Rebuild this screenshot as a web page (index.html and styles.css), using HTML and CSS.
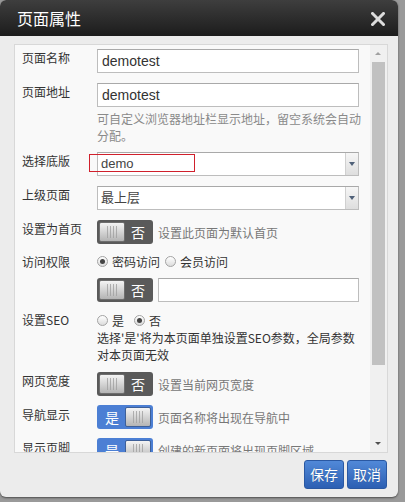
FILE: index.html
```html
<!DOCTYPE html>
<html>
<head>
<meta charset="utf-8">
<link rel="stylesheet" href="styles.css">
</head>
<body>
<div class="dialog">
  <div class="header">
    <span class="title">页面属性</span>
    <svg class="close" width="14" height="14" viewBox="0 0 14 14"><path d="M1.5 1.5 L12.5 12.5 M12.5 1.5 L1.5 12.5" stroke="#dcdcdc" stroke-width="3" stroke-linecap="square"/></svg>
  </div>
  <div class="body">
    <div class="panel">
      <div class="content">
        <div class="row r1">
          <div class="label">页面名称</div>
          <div class="field"><div class="input">demotest</div></div>
        </div>
        <div class="row r2">
          <div class="label">页面地址</div>
          <div class="field">
            <div class="input">demotest</div>
            <div class="hint">可自定义浏览器地址栏显示地址，留空系统会自动分配。</div>
          </div>
        </div>
        <div class="row r3">
          <div class="label">选择底版</div>
          <div class="field">
            <div class="select"><span class="sel-text">demo</span><span class="sel-arrow"></span><span class="redbox"></span></div>
          </div>
        </div>
        <div class="row r4">
          <div class="label">上级页面</div>
          <div class="field">
            <div class="select"><span class="sel-text">最上层</span><span class="sel-arrow"></span></div>
          </div>
        </div>
        <div class="row r5">
          <div class="label">设置为首页</div>
          <div class="field inline">
            <div class="toggle off"><span class="knob"><i class="grip"></i></span><span class="tg-text">否</span></div>
            <span class="desc">设置此页面为默认首页</span>
          </div>
        </div>
        <div class="row r6">
          <div class="label">访问权限</div>
          <div class="field inline">
            <span class="radio checked"></span><span class="rlabel">密码访问</span>
            <span class="radio"></span><span class="rlabel">会员访问</span>
          </div>
        </div>
        <div class="row r7">
          <div class="label"></div>
          <div class="field inline">
            <div class="toggle off"><span class="knob"><i class="grip"></i></span><span class="tg-text">否</span></div>
            <div class="input grow"></div>
          </div>
        </div>
        <div class="row r8">
          <div class="label">设置SEO</div>
          <div class="field">
            <div class="radios">
              <span class="radio"></span><span class="rlabel">是</span>
              <span class="radio checked"></span><span class="rlabel">否</span>
            </div>
            <div class="seo-desc">选择'是'将为本页面单独设置SEO参数，全局参数对本页面无效</div>
          </div>
        </div>
        <div class="row r9">
          <div class="label">网页宽度</div>
          <div class="field inline">
            <div class="toggle off"><span class="knob"><i class="grip"></i></span><span class="tg-text">否</span></div>
            <span class="desc">设置当前网页宽度</span>
          </div>
        </div>
        <div class="row r10">
          <div class="label">导航显示</div>
          <div class="field inline">
            <div class="toggle on"><span class="tg-text">是</span><span class="knob"><i class="grip"></i></span></div>
            <span class="desc">页面名称将出现在导航中</span>
          </div>
        </div>
        <div class="row r11">
          <div class="label">显示页脚</div>
          <div class="field inline">
            <div class="toggle on"><span class="tg-text">是</span><span class="knob"><i class="grip"></i></span></div>
            <span class="desc">创建的新页面将出现页脚区域</span>
          </div>
        </div>
      </div>
      <div class="scrollbar">
        <div class="sb-btn"><span class="sb-up"></span></div>
        <div class="sb-thumb"></div>
        <div class="sb-track"></div>
        <div class="sb-btn"><span class="sb-down"></span></div>
      </div>
    </div>
    <div class="footer">
      <button class="btn">保存</button>
      <button class="btn">取消</button>
    </div>
  </div>
</div>
</body>
</html>
```
FILE: styles.css
```css
html, body {
  margin: 0;
  padding: 0;
}
body {
  width: 405px;
  height: 502px;
  background: #9a9a9a;
  font-family: "Liberation Sans", "Noto Sans CJK SC", sans-serif;
  overflow: hidden;
}
.dialog {
  width: 398px;
  height: 497px;
  background: #ececec;
  border-radius: 6px;
  overflow: hidden;
  box-shadow: 0 1px 2px rgba(0,0,0,0.5);
}
.header {
  height: 36px;
  background: linear-gradient(#3e3e3e, #1c1c1c);
  display: flex;
  align-items: center;
  justify-content: space-between;
  padding: 0 13px 0 17px;
}
.title {
  color: #fff;
  font-family: "Noto Sans CJK SC", sans-serif;
  font-size: 16px;
  line-height: 20px;
}
.close {
  display: block;
  margin-top: 1px;
}
.body {
  padding: 8px 10px 0 14px;
}
.panel {
  height: 409px;
  box-sizing: border-box;
  border: 1px solid #d8d8d8;
  background: #f9f9f9;
  display: flex;
  overflow: hidden;
}
.content {
  flex: 1;
  padding: 4px 11px 0 7px;
  overflow: hidden;
}
.row {
  display: flex;
  align-items: flex-start;
}
.label {
  width: 75px;
  flex: none;
  font-family: "Noto Sans CJK SC", sans-serif;
  font-size: 12px;
  line-height: 17px;
  color: #333;
}
.field {
  flex: 1;
  min-width: 0;
}
.field.inline {
  display: flex;
  align-items: center;
}
.r2 { margin-top: 10px; }
.r3 { margin-top: 8px; }
.r4 { margin-top: 10px; }
.r5 { margin-top: 10px; }
.r6 { margin-top: 9px; align-items: center; }
.r7 { margin-top: 8px; }
.r8 { margin-top: 9px; }
.r9 { margin-top: 9px; }
.r10 { margin-top: 9px; }
.r11 { margin-top: 9px; }
.r10 .label, .r11 .label { padding-top: 1px; }

.input {
  height: 24px;
  box-sizing: border-box;
  border: 1px solid #bdbdbd;
  border-top-color: #a9a9a9;
  background: #fff;
  padding: 0 4px;
  font-size: 14px;
  line-height: 22px;
  color: #333;
}
.input.grow {
  flex: 1;
  margin-left: 5px;
}
.hint {
  margin-top: 3px;
  margin-right: -10px;
  font-family: "Noto Sans CJK SC", sans-serif;
  font-size: 12px;
  line-height: 17px;
  color: #8a8a8a;
}
.select {
  position: relative;
  height: 24px;
  box-sizing: border-box;
  border: 1px solid #bdbdbd;
  border-top-color: #a9a9a9;
  background: #fff;
  display: flex;
}
.sel-text {
  flex: 1;
  padding-left: 3px;
  font-size: 13px;
  line-height: 22px;
  color: #444;
  font-family: "Liberation Sans", "Noto Sans CJK SC", sans-serif;
}
.sel-arrow {
  width: 12px;
  border-left: 1px solid #d0d0d0;
  background: linear-gradient(#f6f6f6, #dedede);
  position: relative;
}
.sel-arrow::after {
  content: "";
  position: absolute;
  left: 3px;
  top: 9px;
  border-left: 3px solid transparent;
  border-right: 3px solid transparent;
  border-top: 4px solid #4f6078;
}
.redbox {
  position: absolute;
  left: -9px;
  top: 1px;
  width: 104px;
  height: 16px;
  border: 1px solid #d0202c;
}

.toggle {
  width: 56px;
  height: 24px;
  flex: none;
  box-sizing: border-box;
  border-radius: 3px;
  padding: 2px;
  display: flex;
  align-items: center;
}
.toggle.off { background: #5a5a5a; }
.toggle.on { background: #4c7fd4; }
.knob {
  width: 26px;
  height: 20px;
  box-sizing: border-box;
  border: 1px solid #6e6e6e;
  border-radius: 2px;
  background: linear-gradient(#f4f4f4, #b4b4b4);
  display: flex;
  align-items: center;
  justify-content: center;
  flex: none;
}
.toggle.on .knob { border-color: #3d5f98; }
.grip {
  width: 11px;
  height: 12px;
  background: repeating-linear-gradient(90deg, #a0a0a0 0 1px, transparent 1px 3px);
  opacity: 0.8;
}
.tg-text {
  flex: 1;
  text-align: center;
  color: #fff;
  font-family: "Noto Sans CJK SC", sans-serif;
  font-size: 14px;
  line-height: 20px;
}
.desc {
  margin-left: 5px;
  font-family: "Noto Sans CJK SC", sans-serif;
  font-size: 12px;
  line-height: 17px;
  color: #777;
  white-space: nowrap;
}
.radios {
  display: flex;
  align-items: center;
  height: 18px;
}
.radio {
  width: 11px;
  height: 11px;
  box-sizing: border-box;
  border-radius: 50%;
  border: 1px solid #a3a3a3;
  background: linear-gradient(#ffffff, #dcdcdc);
  position: relative;
  flex: none;
}
.radio.checked::after {
  content: "";
  position: absolute;
  left: 2px;
  top: 2px;
  width: 5px;
  height: 5px;
  border-radius: 50%;
  background: #444;
}
.rlabel {
  margin: 0 4px 0 4px;
  font-family: "Noto Sans CJK SC", sans-serif;
  font-size: 12px;
  line-height: 17px;
  color: #333;
}
.r6 .rlabel { margin-right: 5px; }
.r8 .rlabel { margin-right: 10px; }
.seo-desc {
  font-family: "Noto Sans CJK SC", sans-serif;
  font-size: 12px;
  line-height: 17px;
  color: #333;
  padding-right: 4px;
}

.scrollbar {
  width: 17px;
  flex: none;
  background: #f0f0f0;
  display: flex;
  flex-direction: column;
}
.sb-btn {
  height: 17px;
  position: relative;
  flex: none;
}
.sb-up, .sb-down {
  position: absolute;
  left: 5px;
  width: 0;
  height: 0;
  border-left: 3px solid transparent;
  border-right: 3px solid transparent;
}
.sb-up {
  top: 7px;
  border-bottom: 3px solid #a0a0a0;
}
.sb-down {
  top: 7px;
  border-top: 3px solid #505050;
}
.sb-thumb {
  height: 303px;
  margin: 0 2px 0 2px;
  background: #c1c1c1;
  flex: none;
}
.sb-track {
  flex: 1;
}

.footer {
  display: flex;
  justify-content: flex-end;
  gap: 3px;
  padding-top: 7px;
  padding-right: 1px;
}
.btn {
  width: 40px;
  height: 29px;
  padding: 0;
  border: 1px solid #2a58a2;
  border-radius: 3px;
  background: linear-gradient(#5189d8, #2c5fb3);
  color: #fff;
  font-family: "Noto Sans CJK SC", sans-serif;
  font-size: 14px;
  line-height: 27px;
  text-shadow: 0 0 1px rgba(0,0,0,0.3);
}
```
